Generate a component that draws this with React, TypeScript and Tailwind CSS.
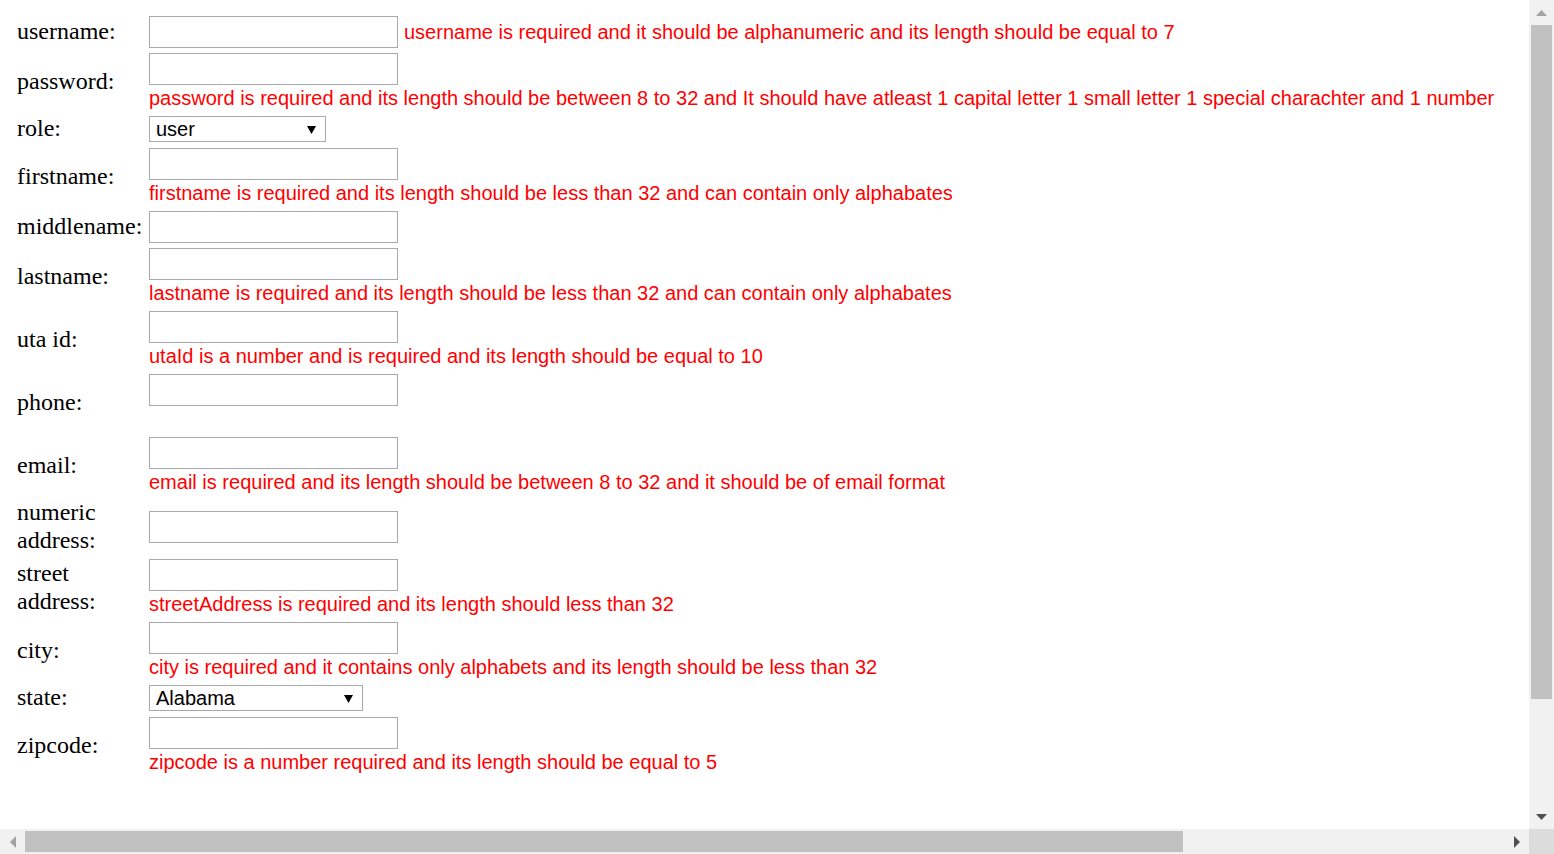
import React from 'react';

interface FieldRow {
  label: string;
  kind: 'input' | 'select';
  error?: string;
  inlineError?: boolean;
  emptyLine?: boolean;
  value?: string;
  selectWidth?: string;
}

const rows: FieldRow[] = [
  { label: 'username:', kind: 'input', error: 'username is required and it should be alphanumeric and its length should be equal to 7', inlineError: true },
  { label: 'password:', kind: 'input', error: 'password is required and its length should be between 8 to 32 and It should have atleast 1 capital letter 1 small letter 1 special charachter and 1 number' },
  { label: 'role:', kind: 'select', value: 'user', selectWidth: 'w-[177px]' },
  { label: 'firstname:', kind: 'input', error: 'firstname is required and its length should be less than 32 and can contain only alphabates' },
  { label: 'middlename:', kind: 'input' },
  { label: 'lastname:', kind: 'input', error: 'lastname is required and its length should be less than 32 and can contain only alphabates' },
  { label: 'uta id:', kind: 'input', error: 'utaId is a number and is required and its length should be equal to 10' },
  { label: 'phone:', kind: 'input', emptyLine: true },
  { label: 'email:', kind: 'input', error: 'email is required and its length should be between 8 to 32 and it should be of email format' },
  { label: 'numeric address:', kind: 'input' },
  { label: 'street address:', kind: 'input', error: 'streetAddress is required and its length should less than 32' },
  { label: 'city:', kind: 'input', error: 'city is required and it contains only alphabets and its length should be less than 32' },
  { label: 'state:', kind: 'select', value: 'Alabama', selectWidth: 'w-[214px]' },
  { label: 'zipcode:', kind: 'input', error: 'zipcode is a number required and its length should be equal to 5' },
];

const TextBox = () => (
  <input type="text" className="block w-[249px] h-[32px] border border-[#a9a9a9] bg-white outline-none" />
);

const FakeSelect = ({ value, width }: { value: string; width: string }) => (
  <div className={`flex items-center justify-between h-[26px] ${width} border border-[#a9a9a9] bg-white pl-[6px] pr-[9px] text-[20px] leading-none text-black font-['Liberation_Sans',Arial,sans-serif]`}>
    <span>{value}</span>
    <svg width="9" height="9" viewBox="0 0 9 9"><polygon points="0,1 9,1 4.5,9" fill="#000" /></svg>
  </div>
);

const Arrow = ({ dir, color }: { dir: 'up' | 'down' | 'left' | 'right'; color: string }) => {
  const pts = {
    up: '0,6 11,6 5.5,0',
    down: '0,0 11,0 5.5,6',
    left: '6,0 6,12 0,6',
    right: '0,0 0,12 6,6',
  }[dir];
  const vert = dir === 'up' || dir === 'down';
  return (
    <svg width={vert ? 11 : 6} height={vert ? 6 : 12} viewBox={vert ? '0 0 11 6' : '0 0 6 12'}>
      <polygon points={pts} fill={color} />
    </svg>
  );
};

export default function App() {
  return (
    <div className="flex w-[1554px] h-[854px] bg-white overflow-hidden">
      <div className="flex flex-col flex-1 min-w-0">
        <div className="flex-1 overflow-hidden">
          <form className="min-w-[1985px] pl-[17px] pt-[15px] pb-[200px]">
            <div className="grid grid-cols-[128px_1fr] gap-x-[4px] gap-y-[4px] items-center">
              {rows.map((row) => (
                <React.Fragment key={row.label}>
                  <div className="text-[24px] text-black font-['Liberation_Serif','Times_New_Roman',serif] leading-[27.5px]">
                    {row.label}
                  </div>
                  <div className={row.kind === 'select' ? 'py-px' : 'pt-px'}>
                    {row.kind === 'select' ? (
                      <FakeSelect value={row.value ?? ''} width={row.selectWidth ?? ''} />
                    ) : row.inlineError ? (
                      <div className="flex items-center gap-[6px]">
                        <TextBox />
                        <span className="text-[20px] text-[#ff0000] font-['Liberation_Sans',Arial,sans-serif] whitespace-nowrap">
                          {row.error}
                        </span>
                      </div>
                    ) : (
                      <>
                        <TextBox />
                        {(row.error || row.emptyLine) && (
                          <div className="h-[26px] leading-[26px] text-[20px] text-[#ff0000] font-['Liberation_Sans',Arial,sans-serif] whitespace-nowrap">
                            {row.error}
                          </div>
                        )}
                      </>
                    )}
                  </div>
                </React.Fragment>
              ))}
            </div>
          </form>
        </div>
        {/* horizontal scrollbar */}
        <div className="flex h-[25px] bg-[#f1f1f1]">
          <div className="flex w-[25px] items-center justify-center">
            <Arrow dir="left" color="#a3a3a3" />
          </div>
          <div className="w-[1158px] my-[2px] bg-[#c1c1c1]" />
          <div className="flex-1" />
          <div className="flex w-[25px] items-center justify-center">
            <Arrow dir="right" color="#505050" />
          </div>
        </div>
      </div>
      {/* vertical scrollbar */}
      <div className="flex flex-col w-[25px] bg-[#f1f1f1]">
        <div className="flex h-[25px] items-center justify-center">
          <Arrow dir="up" color="#a3a3a3" />
        </div>
        <div className="h-[674px] mx-[2px] bg-[#c1c1c1]" />
        <div className="flex-1" />
        <div className="flex h-[25px] items-center justify-center">
          <Arrow dir="down" color="#505050" />
        </div>
        <div className="h-[25px] bg-[#dcdcdc]" />
      </div>
    </div>
  );
}
